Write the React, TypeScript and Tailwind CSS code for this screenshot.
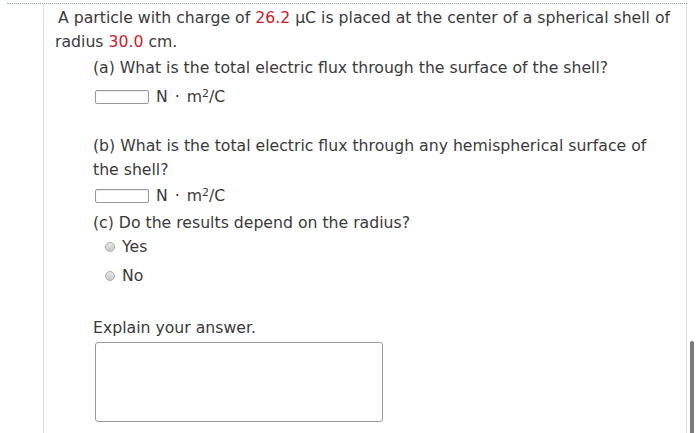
import React from "react";

const Unit = () => (
  <span>
    N <span className="mx-[2px]">·</span> m<sup className="text-[11px]">2</sup>/C
  </span>
);

const Box = () => (
  <div className="w-[54px] h-[14px] border border-[#9a9a9a] rounded-[2px] bg-white shadow-[inset_0_1px_1px_rgba(0,0,0,0.08)]" />
);

const Radio = () => (
  <div className="w-[10px] h-[10px] rounded-full border border-[#aaa] bg-gradient-to-b from-[#e8e8e8] to-[#c8c8c8]" />
);

export default function App() {
  return (
    <div
      className="w-[700px] h-[433px] overflow-hidden bg-white relative text-[#3a3a3a] text-[15.7px] leading-[24px]"
      style={{ fontFamily: '"DejaVu Sans", Verdana, sans-serif' }}
    >
      <div className="ml-[7px] mr-[13px] mt-[3px] border-t border-dotted border-[#7aa7c9] h-[430px]">
        <div className="ml-[36px] border-l border-r border-[#e0e0e0] h-full pl-[11px] pt-[2px]">
          <p className="indent-[3px] whitespace-nowrap">
            A particle with charge of <span className="text-[#c8202d]">26.2</span> μC is placed at the center of a spherical shell of
            <br />
            radius <span className="text-[#c8202d]">30.0</span> cm.
          </p>
          <div className="ml-[38px]">
            <p className="mt-[2px] whitespace-nowrap">(a) What is the total electric flux through the surface of the shell?</p>
            <div className="flex items-center gap-[7px] ml-[2px] mt-[5px] h-[24px]">
              <Box />
              <Unit />
            </div>
            <p className="mt-[25px] whitespace-nowrap">
              (b) What is the total electric flux through any hemispherical surface of
              <br />
              the shell?
            </p>
            <div className="flex items-center gap-[7px] ml-[2px] mt-[2px] h-[24px]">
              <Box />
              <Unit />
            </div>
            <p className="mt-[3px]">(c) Do the results depend on the radius?</p>
            <div className="flex items-center gap-[7px] ml-[12px] h-[24px]">
              <Radio />
              <span>Yes</span>
            </div>
            <div className="flex items-center gap-[7px] ml-[12px] mt-[5px] h-[24px]">
              <Radio />
              <span>No</span>
            </div>
            <p className="mt-[28px]">Explain your answer.</p>
            <div className="ml-[2px] mt-[2px] w-[288px] h-[80px] border border-[#999] rounded-[3px] bg-white" />
          </div>
        </div>
      </div>
      <div className="absolute left-[690px] top-[341px] w-[4px] h-[92px] bg-[#7a7a7a] rounded-t-[2px]" />
    </div>
  );
}
